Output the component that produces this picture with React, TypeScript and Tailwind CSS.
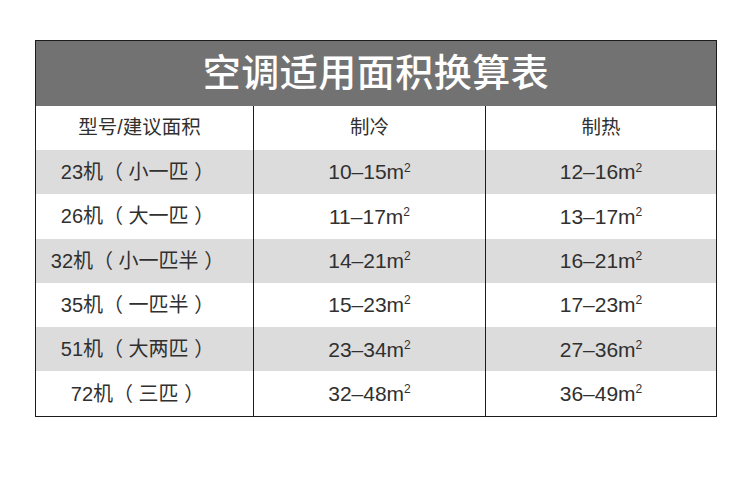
const rows = [
  ['23机（ 小一匹 ）', '10–15', '12–16'],
  ['26机（ 大一匹 ）', '11–17', '13–17'],
  ['32机（ 小一匹半 ）', '14–21', '16–21'],
  ['35机（ 一匹半 ）', '15–23', '17–23'],
  ['51机（ 大两匹 ）', '23–34', '27–36'],
  ['72机（ 三匹 ）', '32–48', '36–49'],
]

function Area({ value }: { value: string }) {
  return (
    <span>
      {value}m<sup className="text-[12px] -top-[0.65em]">2</sup>
    </span>
  )
}

export default function App() {
  return (
    <div className="w-[750px] h-[500px] bg-white pt-[40px] pl-[35px] font-['Liberation_Sans','Noto_Sans_CJK_SC',sans-serif] text-[#303030]">
      <div className="w-[682px] border border-[#1c1c1c]">
        <div className="h-[65px] bg-[#727272] flex items-center justify-center text-white text-[38px] font-medium tracking-[0.5px]">
          空调适用面积换算表
        </div>
        <div className="grid grid-cols-[217px_232px_1fr] text-[21px]">
          <div className="h-[44px] flex items-center justify-center text-[19.5px] pr-[10px] bg-white">型号/建议面积</div>
          <div className="h-[44px] flex items-center justify-center text-[19.5px] bg-white border-l border-[#1c1c1c]">制冷</div>
          <div className="h-[44px] flex items-center justify-center text-[19.5px] bg-white border-l border-[#1c1c1c]">制热</div>
          {rows.map((r, i) => {
            const bg = i % 2 === 0 ? 'bg-[#dcdcdc]' : 'bg-white'
            return [
              <div key={i + 'a'} className={`h-[44.3px] flex items-center justify-center pr-[14px] text-[20px] ${bg}`}>
                {r[0]}
              </div>,
              <div key={i + 'b'} className={`h-[44.3px] flex items-center justify-center border-l border-[#1c1c1c] ${bg}`}>
                <Area value={r[1]} />
              </div>,
              <div key={i + 'c'} className={`h-[44.3px] flex items-center justify-center border-l border-[#1c1c1c] ${bg}`}>
                <Area value={r[2]} />
              </div>,
            ]
          })}
        </div>
      </div>
    </div>
  )
}
